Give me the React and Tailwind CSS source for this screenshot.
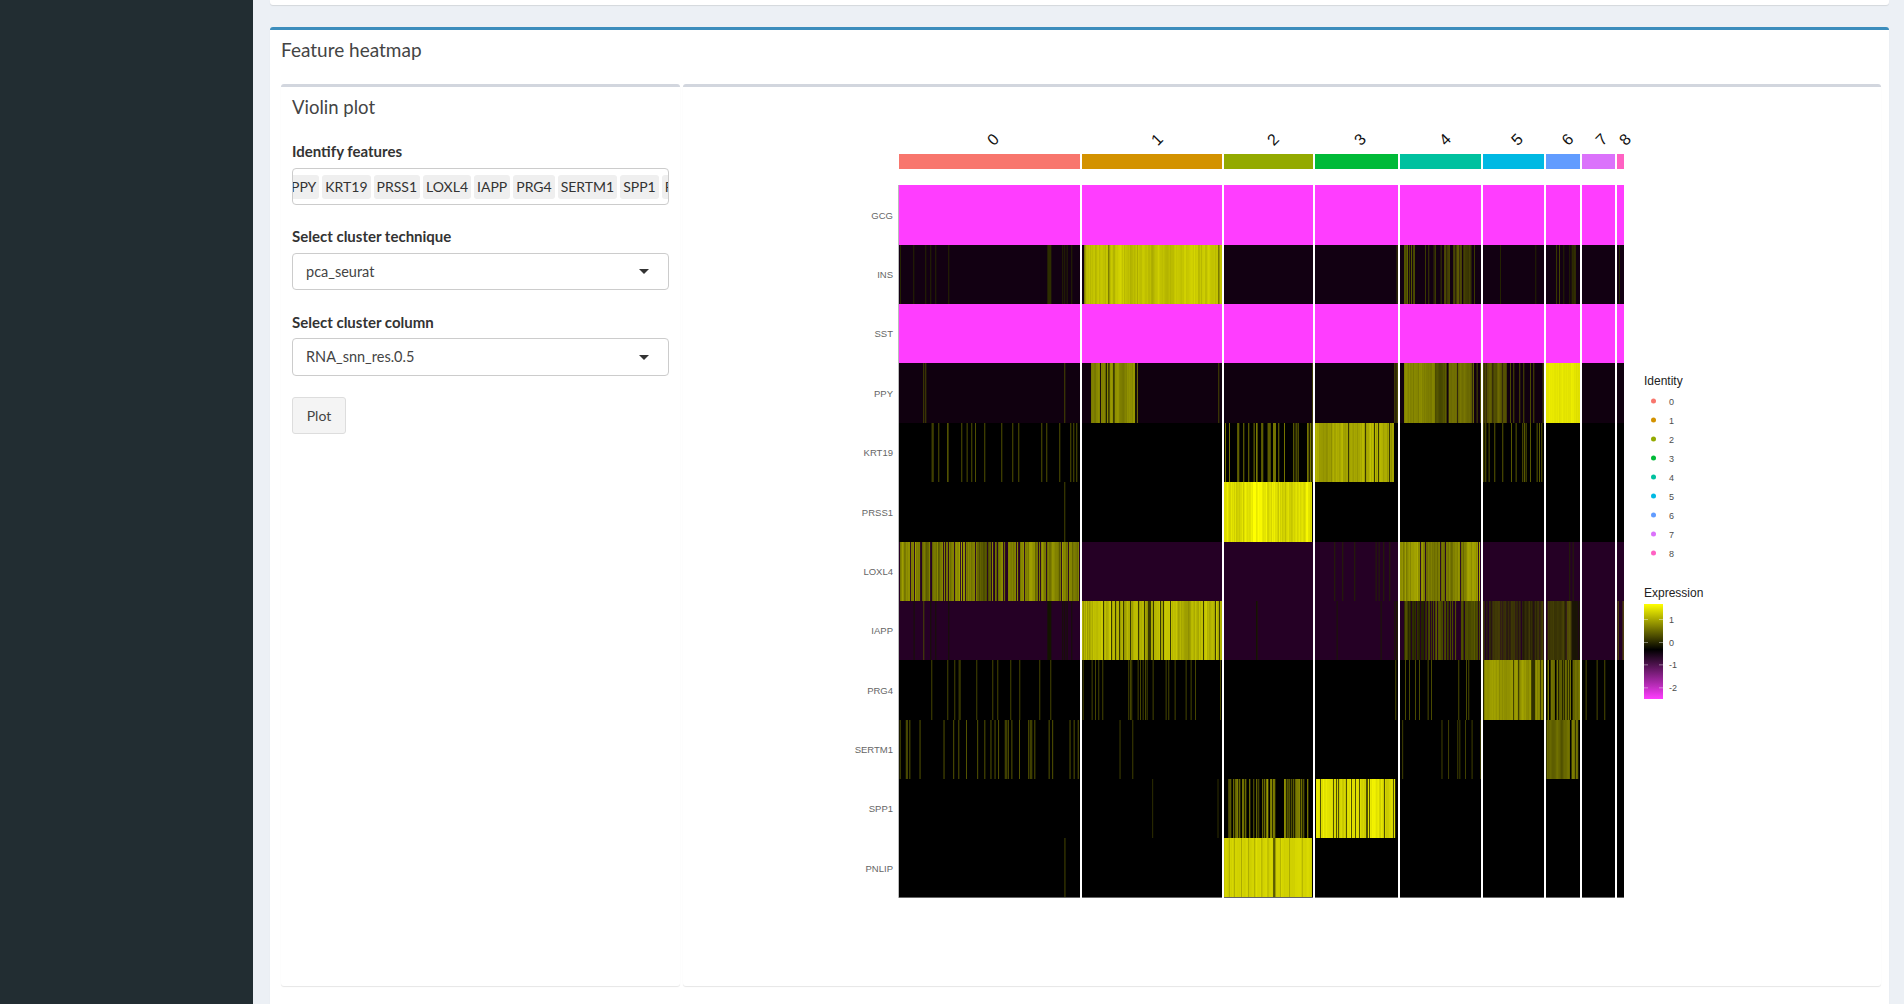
import React from 'react';

const UI_FONT = 'font-["Lato","Noto_Sans",sans-serif]';

// crop helpers, the stripe positions were read off zoomed crops of the plot
const L = z => 840 + z / 3;
const R = z => 1250 + z / 3;
const W = z => 840 + z / 1.96;
const Ls = a => a.map(L);
const Rs = a => a.map(R);
const Ws = a => a.map(W);

const CLUSTERS = [
  { id: '0', x0: 899, x1: 1080, color: '#F8766D', lx: 993 },
  { id: '1', x0: 1082, x1: 1222, color: '#D39200', lx: 1157 },
  { id: '2', x0: 1224, x1: 1313, color: '#93AA00', lx: 1273 },
  { id: '3', x0: 1315, x1: 1398, color: '#00BA38', lx: 1360 },
  { id: '4', x0: 1400, x1: 1481, color: '#00C19F', lx: 1445 },
  { id: '5', x0: 1483, x1: 1544, color: '#00B9E3', lx: 1517 },
  { id: '6', x0: 1546, x1: 1580, color: '#619CFF', lx: 1567.5 },
  { id: '7', x0: 1582, x1: 1615, color: '#DB72FB', lx: 1601.5 },
  { id: '8', x0: 1617, x1: 1624, color: '#FF61C3', lx: 1625 },
];

const ROW_EDGES = [185, 245, 304, 363, 423, 482, 542, 601, 660, 720, 779, 838, 898];

const MAGENTA = '#ff3dff';

const ROWS = [
  { name: 'GCG', base: MAGENTA },
  {
    name: 'INS', base: '#120012',
    fills: [
      [1084, 1222, 0.66, 0.84, 0],
      [R(462), R(495), 0.2, 0.42, 0.35],
      [R(583), R(600), 0.25, 0.45, 0.2],
      [R(610), R(635), 0.25, 0.45, 0.2],
      [R(640), R(665), 0.18, 0.38, 0.1],
      [R(918), R(930), 0.12, 0.28, 0.4],
      [R(965), R(982), 0.12, 0.28, 0.4],
    ],
    lines: [
      { x: Ls([180, 220, 256, 271, 286, 325, 667, 673, 680, 694]), v: 0.16 },
      { x: Ls([622, 624, 626, 628]), v: 0.18, w: 2 },
      { x: Ls([733, 805, 1135]), v: 0.35, w: 1 },
      { x: Rs([440, 525, 535, 551, 555, 572, 672]), v: 0.25 },
      { x: Rs([750, 856, 940, 958, 1107]), v: 0.15 },
    ],
  },
  { name: 'SST', base: MAGENTA },
  {
    name: 'PPY', base: '#10000f',
    fills: [
      [L(753), L(893), 0.42, 0.6, 0.1],
      [R(462), R(555), 0.42, 0.58, 0.08],
      [R(555), R(590), 0.25, 0.4, 0.08],
      [R(590), R(672), 0.42, 0.58, 0.08],
      [R(700), R(770), 0.3, 0.55, 0.12],
      [1546, 1580, 0.86, 0.95, 0],
    ],
    lines: [
      { x: Ls([250, 256, 673, 1135]), v: 0.3 },
      { x: Ls([797, 805, 820, 885]), v: 0.08, w: 1.2 },
      { x: Rs([187, 433, 437, 441, 680, 690, 780, 790, 808, 820, 840, 850, 878, 881]), v: 0.32 },
    ],
  },
  {
    name: 'KRT19', base: '#000000',
    fills: [
      [R(195), R(432), 0.55, 0.76, 0.06],
    ],
    lines: [
      { x: Ls([275, 278, 295, 321, 323, 364, 380, 394, 405, 433, 484, 517, 535, 604, 619, 658, 691, 700, 709]), v: 0.35 },
      { x: Ls([1155, 1167, 1192, 1195, 1210, 1225, 1250]), v: 0.5 },
      { x: Rs([11, 18, 34, 37, 53, 56, 59, 69, 72, 75, 85, 102, 130, 137, 143, 171, 175, 180, 185]), v: 0.5 },
      { x: Rs([700, 706, 716, 733, 757, 783, 797, 817, 822, 827, 840, 860, 867, 874]), v: 0.38 },
    ],
  },
  {
    name: 'PRSS1', base: '#000000',
    fills: [[1224, 1312, 0.74, 1, 0]],
    lines: [{ x: [L(673)], v: 0.3 }],
  },
  {
    name: 'LOXL4', base: '#250025',
    fills: [
      [900, 1079, 0.3, 0.62, 0.16],
      [R(450), R(690), 0.36, 0.68, 0.1],
    ],
    lines: [
      { x: Rs([253, 277, 313, 377, 386, 400, 418, 958, 968]), v: 0.14 },
    ],
  },
  {
    name: 'IAPP', base: '#250025',
    fills: [
      [1082, 1222, 0.56, 0.82, 0.1],
      [R(462), R(690), 0.14, 0.42, 0.24],
      [R(700), R(880), 0.12, 0.36, 0.3],
      [R(890), R(965), 0.12, 0.48, 0.15],
      [R(965), R(990), 0.08, 0.12, 0.1],
    ],
    lines: [
      { x: Ls([221, 271, 286, 325, 667, 673, 680, 694]), v: 0.08 },
      { x: Ls([250]), v: 0.3 },
      { x: Ls([622, 625, 628]), v: 0.08, w: 2 },
      { x: Ls([1248]), v: 0.08 },
      { x: Rs([20, 260, 392, 433, 438, 442]), v: 0.1 },
      { x: Rs([665, 1103, 1118]), v: 0.4 },
    ],
  },
  {
    name: 'PRG4', base: '#000000',
    fills: [
      [R(700), R(880), 0.6, 0.82, 0.14],
      [R(893), R(990), 0.38, 0.7, 0.32],
    ],
    lines: [
      { x: Ls([274, 322, 343, 356, 359, 409, 457, 472, 511, 538, 598, 631, 728, 755, 765, 775, 787, 865, 870, 874, 893, 900, 908, 915, 920, 938, 977, 985, 1004, 1037, 1052, 1065, 1140]), v: 0.3 },
      { x: Rs([436, 465, 477, 495, 507, 533, 543, 625, 648, 655, 1007, 1040, 1063]), v: 0.32 },
    ],
  },
  {
    name: 'SERTM1', base: '#000000',
    fills: [[W(1385), W(1447), 0.36, 0.62, 0.04]],
    lines: [
      { x: Ws([117, 129, 131, 136, 156, 203, 222, 232, 247, 269, 283, 295, 303, 310, 323, 326, 329, 336, 351, 369, 372, 375, 381, 409, 416, 450, 458, 466]), v: 0.36 },
      { x: Ws([548, 573, 1102, 1179, 1192, 1210, 1214, 1225, 1238, 1255]), v: 0.28 },
    ],
  },
  {
    name: 'SPP1', base: '#000000',
    fills: [
      [W(753), W(925), 0.3, 0.7, 0.6],
      [W(933), W(1088), 0.8, 0.97, 0.2],
    ],
    lines: [{ x: Ws([612, 740]), v: 0.2 }],
  },
  {
    name: 'PNLIP', base: '#000000',
    fills: [[W(753), W(925), 0.92, 1, 0]],
    lines: [
      { x: [W(440)], v: 0.3 },
      { x: Ws([762, 772, 786, 800, 812, 826, 838, 862, 880, 905]), v: 0.66 },
      { x: [W(849), W(851)], v: 0.3, w: 1.2 },
    ],
  },
];

const LEGEND_Y = [401, 420, 439, 458, 477, 496, 515, 534, 553];

function yellow(v) {
  const c = Math.round(v * 255);
  return `rgb(${c},${c},0)`;
}

// small seeded generator, keeps the stripes the same on every render
function makeRandom(seed) {
  let s = seed;
  return () => {
    s = (s + 0x6d2b79f5) | 0;
    let t = Math.imul(s ^ (s >>> 15), 1 | s);
    t = (t + Math.imul(t ^ (t >>> 7), 61 | t)) ^ t;
    return ((t ^ (t >>> 14)) >>> 0) / 4294967296;
  };
}

function FillStripes({ fill, seed, y, h }) {
  const [x0, x1, lo, hi, gap] = fill;
  const rnd = makeRandom(seed);
  const bars = [];
  let drift = 0.5;
  for (let x = x0; x < x1; x += 1) {
    drift = drift * 0.85 + rnd() * 0.15;
    const isGap = rnd() < gap;
    // bright cells never drop to the base colour, their gaps stay olive
    if (isGap && lo < 0.5) continue;
    const t = Math.max(0, Math.min(1, (drift - 0.5) * 2.5 + 0.3 + rnd() * 0.4));
    const v = isGap ? lo * 0.4 : lo + (hi - lo) * t;
    bars.push(<rect key={x} x={x} y={y} width={Math.min(1.1, x1 - x)} height={h} fill={yellow(v)} />);
  }
  return <g>{bars}</g>;
}

function Heatmap() {
  return (
    <svg viewBox="850 120 860 790" width="860" height="790" className="block">
      <g fontFamily='"Liberation Sans", sans-serif'>
        {CLUSTERS.map(c => (
          <g key={c.id}>
            <rect x={c.x0} y={154} width={c.x1 - c.x0} height={15} fill={c.color} />
            <text x={c.lx} y={139.5} fontSize="16" fill="#111" textAnchor="middle" dominantBaseline="central" transform={`rotate(-45 ${c.lx} 139.5)`}>
              {c.id}
            </text>
          </g>
        ))}

        {ROWS.map((row, i) => {
          const y = ROW_EDGES[i];
          const h = ROW_EDGES[i + 1] - y;
          return (
            <g key={row.name}>
              <text x={893} y={y + h / 2} fontSize="9.5" fill="#666" textAnchor="end" dominantBaseline="central">{row.name}</text>
              <rect x={899} y={y} width={725} height={h} fill={row.base} />
              {(row.fills || []).map((f, j) => (
                <FillStripes key={j} fill={f} seed={i * 100 + j + 7} y={y} h={h} />
              ))}
              {(row.lines || []).map((l, j) => l.x.map((x, k) => (
                <rect key={`${j}-${k}`} x={x} y={y} width={l.w || 0.9} height={h} fill={yellow(l.v)} />
              )))}
            </g>
          );
        })}

        <rect x={899} y={897} width={725} height={1} fill="#666" />
        <rect x={898} y={185} width={1} height={713} fill="#bbb" />
        {/* white gutters between clusters */}
        {CLUSTERS.slice(0, -1).map(c => (
          <rect key={c.id} x={c.x1} y={185} width={2} height={713} fill="#fff" />
        ))}

        <text x={1644} y={381} fontSize="12" fill="#222" dominantBaseline="central">Identity</text>
        {CLUSTERS.map((c, i) => (
          <g key={c.id}>
            <circle cx={1653.5} cy={LEGEND_Y[i]} r={2.5} fill={c.color} />
            <text x={1669} y={LEGEND_Y[i] + 0.5} fontSize="9" fill="#4d4d4d" dominantBaseline="central">{c.id}</text>
          </g>
        ))}

        <text x={1644} y={593} fontSize="12" fill="#222" dominantBaseline="central">Expression</text>
        <defs>
          <linearGradient id="expression" x1="0" y1="0" x2="0" y2="1">
            <stop offset="0" stopColor="#ffff00" />
            <stop offset="0.48" stopColor="#000000" />
            <stop offset="1" stopColor="#ff3dff" />
          </linearGradient>
        </defs>
        <rect x={1644} y={604} width={19} height={95} fill="url(#expression)" />
        {[[619, '1'], [642, '0'], [664.6, '-1'], [687.6, '-2']].map(([y, label]) => (
          <g key={label}>
            <rect x={1644} y={y} width={4} height={0.6} fill="#fff" opacity="0.7" />
            <rect x={1659} y={y} width={4} height={0.6} fill="#fff" opacity="0.7" />
            <text x={1669} y={y + 0.5} fontSize="9" fill="#4d4d4d" dominantBaseline="central">{label}</text>
          </g>
        ))}
      </g>
    </svg>
  );
}

function Chip({ children }) {
  return <span className="shrink-0 h-6 flex items-center px-[3px] rounded-[3px] bg-[#efefef] text-sm text-[#333]">{children}</span>;
}

function FieldLabel({ children, className = '' }) {
  return <label className={`block text-[15px] font-bold text-[#333] leading-[18px] ${className}`}>{children}</label>;
}

function SelectBox({ value, className = '' }) {
  return (
    <div className={`flex items-center justify-between w-[377px] border border-[#ccc] rounded-[4px] pl-[13px] pr-[19px] text-[14.5px] text-[#444] ${className}`}>
      <span>{value}</span>
      <span className="w-0 h-0 border-x-[5.5px] border-x-transparent border-t-[5px] border-t-[#333]" />
    </div>
  );
}

export default function App() {
  return (
    <div className={`flex h-[1004px] overflow-hidden bg-[#ecf0f5] ${UI_FONT}`}>
      <aside className="w-[253px] shrink-0 bg-[#222d32]" />
      <main className="flex-1 pl-[17px] pr-[15px]">
        <div className="h-[5px] bg-white rounded-b-[3px] shadow-[0_1px_1px_rgba(0,0,0,0.1)]" />
        <section className="mt-[22px] h-[1100px] bg-white border-t-[3px] border-[#3c8dbc] rounded-t-[3px] pl-[11px] pr-[8px] shadow-[0_1px_1px_rgba(0,0,0,0.1)]">
          <h3 className="pt-[8px] h-[54px] text-[19px] leading-6 text-[#444]">Feature heatmap</h3>
          <div className="flex gap-[3px] h-[902px]">
            <div className="w-[399px] shrink-0 border-t-[3px] border-[#d2d6de] rounded-[3px] px-[11px] shadow-[0_1px_1px_rgba(0,0,0,0.1)]">
              <h3 className="pt-[8px] h-[55px] text-[18.5px] leading-6 text-[#444]">Violin plot</h3>
              <FieldLabel>Identify features</FieldLabel>
              <div className="mt-[8px] w-[377px] h-[37px] border border-[#ccc] rounded-[4px] flex items-center gap-[3px] overflow-hidden">
                <div className="flex items-center gap-[3px] -ml-[5px]">
                  <Chip>PPY</Chip>
                  <Chip>KRT19</Chip>
                  <Chip>PRSS1</Chip>
                  <Chip>LOXL4</Chip>
                  <Chip>IAPP</Chip>
                  <Chip>PRG4</Chip>
                  <Chip>SERTM1</Chip>
                  <Chip>SPP1</Chip>
                  <Chip>PNLIP</Chip>
                </div>
              </div>
              <FieldLabel className="mt-[22px]">Select cluster technique</FieldLabel>
              <SelectBox value="pca_seurat" className="mt-[8px] h-[37px]" />
              <FieldLabel className="mt-[23px]">Select cluster column</FieldLabel>
              <SelectBox value="RNA_snn_res.0.5" className="mt-[7px] h-[38px]" />
              <button className="block mt-[21px] w-[54px] h-[37px] bg-[#f4f4f4] border border-[#ddd] rounded-[3px] text-sm text-[#444]">Plot</button>
            </div>
            <div className="flex-1 border-t-[3px] border-[#d2d6de] rounded-[3px] shadow-[0_1px_1px_rgba(0,0,0,0.1)]">
              <div className="ml-[167px] mt-[33px]">
                <Heatmap />
              </div>
            </div>
          </div>
        </section>
      </main>
    </div>
  );
}
